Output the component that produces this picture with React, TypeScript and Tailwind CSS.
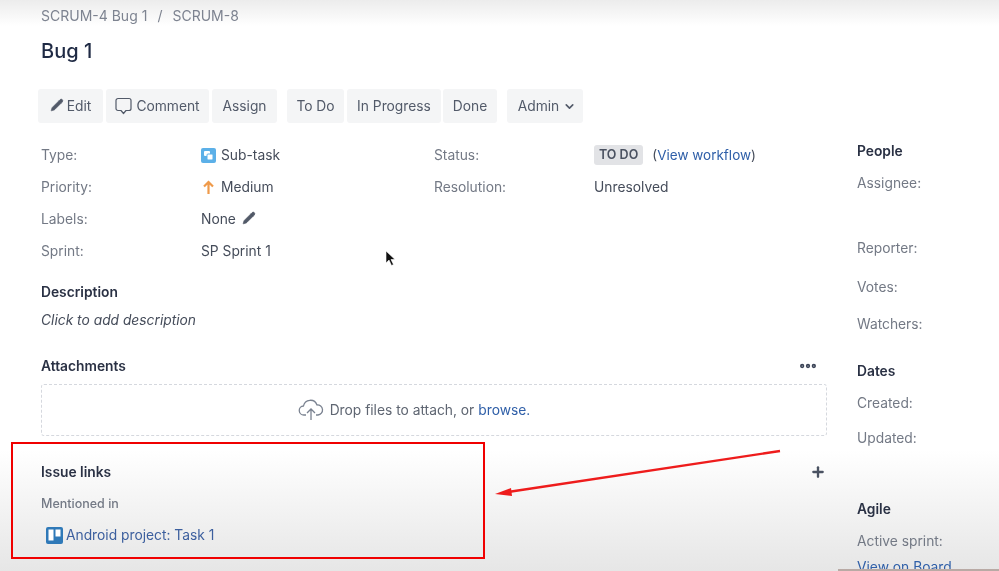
import { ChevronDown, MoreHorizontal, Pencil, Plus } from "lucide-react";

const fields = [
  ["Type:", "Sub-task", "Status:", ""],
  ["Priority:", "Medium", "Resolution:", "Unresolved"],
  ["Labels:", "None", "", ""],
  ["Sprint:", "SP Sprint 1", "", ""],
];

function Btn({ children, className = "" }: { children: React.ReactNode; className?: string }) {
  return (
    <div className={`flex h-[34px] items-center justify-center rounded-[3px] bg-[#f4f5f6] text-[#525a69] ${className}`}>
      {children}
    </div>
  );
}

function SubtaskIcon() {
  return (
    <svg width="15" height="15" viewBox="0 0 15 15" className="mr-[5px]">
      <rect width="15" height="15" rx="2" fill="#5cb0e8" />
      <rect x="3" y="3" width="6" height="5" rx="1" fill="#fff" />
      <rect x="6" y="6" width="6" height="6" rx="1" fill="#fff" stroke="#5cb0e8" />
    </svg>
  );
}

function ArrowUp() {
  return (
    <svg width="15" height="15" viewBox="0 0 15 15" fill="none" stroke="#ef9a4a" strokeWidth="2.2" className="mr-[5px]">
      <path d="M7.5 14V2M3 6.5l4.5-4.5L12 6.5" />
    </svg>
  );
}

function Side({ label, className = "" }: { label: string; className?: string }) {
  return <div className={`text-[#737985] ${className}`}>{label}</div>;
}

function Heading({ label, className = "" }: { label: string; className?: string }) {
  return <div className={`font-semibold text-[#2a3144] ${className}`}>{label}</div>;
}

export default function App() {
  return (
    <div className="relative flex h-[571px] w-[999px] overflow-hidden bg-[linear-gradient(to_bottom,#ececec_0px,#ffffff_26px,#ffffff_450px,#e6e6e6_571px)] font-['Inter','Liberation_Sans',sans-serif] text-[13.8px] text-[#454c5a] blur-[0.4px]">
      <div className="ml-[41px] w-[786px] shrink-0">
        <div className="mt-[5px] flex h-5 items-center text-[14px] text-[#7d8390]">
          SCRUM-4 Bug 1<span className="mx-[10px]">/</span>SCRUM-8
        </div>
        <div className="mt-[10px] flex h-[32px] items-center text-[20px] font-medium text-[#1f2a44]">Bug 1</div>

        <div className="-ml-[3px] mt-[22px] flex">
          <Btn className="w-[65px] gap-[3px]">
            <Pencil size={14} fill="#525a69" strokeWidth={1} className="-mt-[2px]" /> Edit
          </Btn>
          <Btn className="ml-[3px] w-[103px] gap-[4px]">
            <svg width="17" height="18" viewBox="0 0 17 18" fill="none" stroke="#525a69" strokeWidth="1.2">
              <path d="M3 1.5h11a2 2 0 0 1 2 2v8a2 2 0 0 1-2 2h-3l-2.5 3-2.5-3H3a2 2 0 0 1-2-2v-8a2 2 0 0 1 2-2z" strokeLinejoin="round" />
            </svg>
            Comment
          </Btn>
          <Btn className="ml-[3px] w-[65px]">Assign</Btn>
          <Btn className="ml-[10px] w-[57px]">To Do</Btn>
          <Btn className="ml-[3px] w-[94px]">In Progress</Btn>
          <Btn className="ml-[2px] w-[54px]">Done</Btn>
          <Btn className="ml-[10px] w-[76px] gap-[4px] pl-[4px]">
            Admin <ChevronDown size={13} strokeWidth={3} />
          </Btn>
        </div>

        <div className="mt-[16px] grid auto-rows-[32px] grid-cols-[160px_233px_160px_1fr] items-center">
          {fields.map(([a, b, c, d]) => (
            <div key={a} className="contents">
              <div className="text-[#737985]">{a}</div>
              <div className="flex items-center">
                {b === "Sub-task" && <SubtaskIcon />}
                {b === "Medium" && <ArrowUp />}
                {b}
                {b === "None" && <Pencil size={14} fill="#525a69" strokeWidth={1} className="ml-[6px] -mt-[3px]" />}
              </div>
              <div className="text-[#737985]">{c}</div>
              <div className="flex items-center">
                {c === "Status:" ? (
                  <>
                    <span className="rounded-[3px] bg-[#e2e3e6] px-[5px] py-[1px] text-[12.5px] font-semibold text-[#4a5160]">TO DO</span>
                    <span className="ml-[9px] text-[13.5px]">
                      (<span className="text-[#2f5fa8]">View workflow</span>)
                    </span>
                  </>
                ) : (
                  d
                )}
              </div>
            </div>
          ))}
        </div>

        <Heading label="Description" className="mt-[15px] flex h-[20px] items-center" />
        <div className="mt-[8px] flex h-[20px] items-center italic">Click to add description</div>

        <div className="mt-[26px] flex h-[20px] items-center justify-between">
          <Heading label="Attachments" />
          <MoreHorizontal size={20} strokeWidth={3.2} className="mr-[9px] text-[#3a4356]" />
        </div>
        <div className="mt-[8px] flex h-[52px] items-center justify-center rounded-[3px] border border-dashed border-[#d5d8de] pr-[40px] text-[#5f6672]">
          <svg width="26" height="24" viewBox="0 0 26 24" fill="none" stroke="#7a8290" strokeWidth="1.3" className="mr-[6px]">
            <path d="M8 17H6a4.5 4.5 0 0 1-.5-9 7 7 0 0 1 13.5-1 5 5 0 0 1 1 10h-2" strokeLinejoin="round" />
            <path d="M13 22V11M9 15l4-4 4 4" />
          </svg>
          Drop files to attach, or<span className="ml-[4px] text-[#2f5fa8]">browse.</span>
        </div>

        <div className="mt-[26px] flex h-[20px] items-center justify-between">
          <Heading label="Issue links" />
          <Plus size={16} strokeWidth={3.5} className="mr-[1px] text-[#4a5262]" />
        </div>
        <div className="mt-[13px] flex h-[18px] items-center text-[12.5px] font-medium text-[#737985]">Mentioned in</div>
        <div className="ml-[5px] mt-[12px] flex h-[20px] items-center text-[#3c5f9e]">
          <svg width="17" height="17" viewBox="0 0 17 17" className="mr-[3px]">
            <rect width="17" height="17" rx="2" fill="#2f79b8" />
            <rect x="2.5" y="2.5" width="5" height="11" fill="#fff" />
            <rect x="9.5" y="2.5" width="5" height="7" fill="#fff" />
          </svg>
          Android project: Task 1
        </div>
      </div>

      <div className="ml-[30px] flex-1">
        <Heading label="People" className="mt-[141px] flex h-[20px] items-center" />
        <Side label="Assignee:" className="mt-[12px] flex h-[20px] items-center" />
        <Side label="Reporter:" className="mt-[45px] flex h-[20px] items-center" />
        <Side label="Votes:" className="mt-[19px] flex h-[20px] items-center" />
        <Side label="Watchers:" className="mt-[17px] flex h-[20px] items-center" />
        <Heading label="Dates" className="mt-[27px] flex h-[20px] items-center" />
        <Side label="Created:" className="mt-[12px] flex h-[20px] items-center" />
        <Side label="Updated:" className="mt-[15px] flex h-[20px] items-center" />
        <Heading label="Agile" className="mt-[51px] flex h-[20px] items-center" />
        <Side label="Active sprint:" className="mt-[12px] flex h-[20px] items-center" />
        <div className="mt-[6px] flex h-[20px] items-center text-[#2f5fa8]">View on Board</div>
      </div>

      {/* annotation drawn over the screenshot */}
      <div className="absolute left-[11px] top-[442px] h-[117px] w-[474px] border-2 border-[#f00000]" />
      <svg width="300" height="60" viewBox="0 0 300 60" className="absolute left-[490px] top-[445px]">
        <path d="M290 6L18 47" stroke="#ee1c1c" strokeWidth="2.4" />
        <path d="M5 49l16-6 1 8z" fill="#ee1c1c" />
      </svg>
      <svg width="12" height="18" viewBox="0 0 12 18" className="absolute left-[385px] top-[250px]">
        <path d="M1 1v12l3-3 2.5 5.5 2-1L6 9.5h4z" fill="#111" stroke="#fff" strokeWidth="0.6" />
      </svg>
      <div className="absolute bottom-0 left-[838px] h-[2px] w-[161px] bg-[#b9aaa5]" />
    </div>
  );
}
